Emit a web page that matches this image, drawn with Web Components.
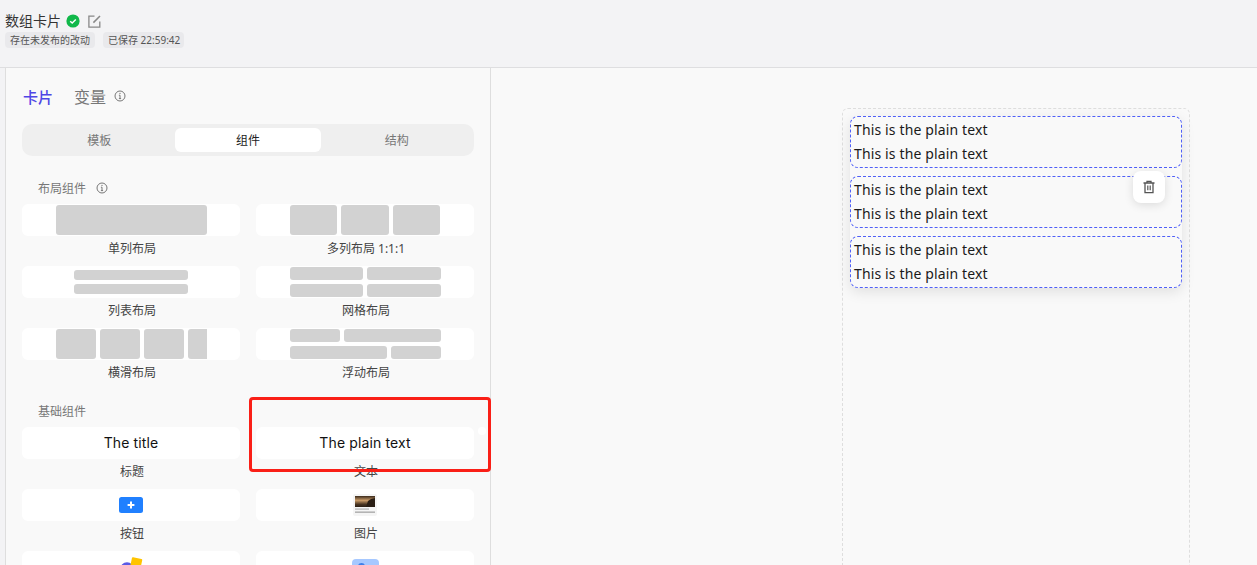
<!DOCTYPE html>
<html lang="zh">
<head>
<meta charset="utf-8">
<title>数组卡片</title>
<style>
  html, body { margin: 0; height: 100%; overflow: hidden; background: #f9f9f9; }
  body { font-family: "Noto Sans CJK SC", "Liberation Sans", sans-serif; }
</style>
</head>
<body>
<editor-app></editor-app>

<script>
const CJK = '"Noto Sans", "Noto Sans CJK SC", sans-serif';
const INFO_ICON = `<svg width="12" height="12" viewBox="0 0 12 12" fill="none" stroke="#777" stroke-width="1"><circle cx="6" cy="6" r="5"/><path d="M6 5.2v3.2M4.9 8.6h2.2M4.9 5.2H6"/><circle cx="6" cy="3.4" r=".6" fill="#777" stroke="none"/></svg>`;

class EditorHeader extends HTMLElement {
    connectedCallback() {
        this.attachShadow({ mode: 'open' });
        this.shadowRoot.innerHTML = `
            <style>
                :host {
                    display: block;
                    height: 55px;
                    padding: 12px 5px 0;
                    background: #f3f3f5;
                    border-bottom: 1px solid #dedee0;
                    font-family: ${CJK};
                }
                .title {
                    display: flex;
                    align-items: center;
                    height: 18px;
                    font-size: 14px;
                    line-height: 18px;
                    color: #333;
                }
                .title svg { display: block; flex: none; }
                .check { margin-left: 5px; }
                .edit { margin-left: 8px; }
                .tags { display: flex; gap: 8px; margin-top: 2px; }
                .tag {
                    height: 16px;
                    line-height: 16px;
                    padding: 0 5px;
                    font-size: 10px;
                    color: #555;
                    background: #e9e9ec;
                    border-radius: 4px;
                }
                .tag + .tag { padding-right: 4px; }
            </style>
            <div class="title">
                <span>数组卡片</span>
                <svg class="check" width="14" height="14" viewBox="0 0 14 14"><circle cx="7" cy="7" r="6.6" fill="#10b84a"/><path d="M4.2 7.2l2 1.9 3.6-3.6" fill="none" stroke="#fff" stroke-width="1.4"/></svg>
                <svg class="edit" width="13" height="13" viewBox="0 0 13 13" fill="none" stroke="#888" stroke-width="1.3"><path d="M6.5 1.2H.9v10.9h10.9V6.5"/><path d="M5.4 7.6L12 1" stroke-width="1.5"/></svg>
            </div>
            <div class="tags">
                <span class="tag">存在未发布的改动</span>
                <span class="tag">已保存 22:59:42</span>
            </div>
        `;
    }
}

class PanelTabs extends HTMLElement {
    connectedCallback() {
        this.attachShadow({ mode: 'open' });
        this.shadowRoot.innerHTML = `
            <style>
                :host {
                    display: grid;
                    grid-template-columns: repeat(3, 1fr);
                    gap: 2px;
                    padding: 4px;
                    height: 24px;
                    background: #efefef;
                    border-radius: 10px;
                }
                div {
                    height: 24px;
                    line-height: 26px;
                    text-align: center;
                    font-size: 12px;
                    color: #777;
                    border-radius: 6px;
                }
                .on { background: #fff; color: #222; }
            </style>
            <div>模板</div>
            <div class="on">组件</div>
            <div>结构</div>
        `;
    }
}

class SectionLabel extends HTMLElement {
    connectedCallback() {
        this.attachShadow({ mode: 'open' });
        const info = this.hasAttribute('info') ? INFO_ICON : '';
        this.shadowRoot.innerHTML = `
            <style>
                :host {
                    display: flex;
                    align-items: center;
                    gap: 10px;
                    height: 24px;
                    padding-left: 16px;
                    margin-bottom: 4px;
                    font-size: 12px;
                    color: #777;
                }
                svg { display: block; }
            </style>
            <span><slot></slot></span>${info}
        `;
    }
}

class CompTile extends HTMLElement {
    connectedCallback() {
        this.attachShadow({ mode: 'open' });
        const label = this.getAttribute('label');
        this.shadowRoot.innerHTML = `
            <style>
                :host { display: block; height: 62px; }
                .box {
                    height: 32px;
                    display: flex;
                    align-items: center;
                    justify-content: center;
                    background: #fff;
                    border-radius: 6px;
                    overflow: hidden;
                }
                .label {
                    height: 24px;
                    padding-left: 2px;
                    line-height: 26px;
                    text-align: center;
                    font-size: 12px;
                    color: #444;
                }
            </style>
            <div class="box"><slot></slot></div>
            ${label ? `<div class="label">${label}</div>` : ''}
        `;
    }
}

// grey placeholder that shows the shape of a layout: rows of blocks with given widths
class LayoutThumb extends HTMLElement {
    connectedCallback() {
        this.attachShadow({ mode: 'open' });
        const rows = this.getAttribute('rows').split('|').map(r => r.split(',').map(Number));
        const h = (30 - (rows.length - 1) * 4) / rows.length;
        const size = this.getAttribute('size') || 151;
        const blockH = this.getAttribute('block') || h;
        this.shadowRoot.innerHTML = `
            <style>
                :host {
                    display: flex;
                    flex-direction: column;
                    gap: 4px;
                    width: ${size}px;
                    overflow: hidden;
                }
                .row { display: flex; gap: 4px; }
                i {
                    flex: none;
                    display: block;
                    height: ${blockH}px;
                    background: #d2d2d2;
                    border-radius: 3px;
                }
            </style>
            ${rows.map(r => `<div class="row">${r.map(w => `<i style="width:${w}px"></i>`).join('')}</div>`).join('')}
        `;
    }
}

class SidePanel extends HTMLElement {
    connectedCallback() {
        this.attachShadow({ mode: 'open' });
        this.shadowRoot.innerHTML = `
            <style>
                :host {
                    display: block;
                    position: relative;
                    width: 484px;
                    background: #f9f9f9;
                    border-left: 1px solid #dedede;
                    border-right: 1px solid #dedede;
                }
                .inner { padding: 0 16px; }
                .head {
                    display: flex;
                    align-items: center;
                    height: 56px;
                    font-size: 16px;
                    color: #777;
                }
                .head b { font-size: 15px; font-weight: 500; color: #4f46e5; margin: 0 21px 0 1px; }
                .head svg { margin-left: 8px; }
                .grid { display: grid; grid-template-columns: 218px 218px; column-gap: 16px; }
                panel-tabs { margin-bottom: 20px; }
                .base { margin-top: 9px; }
                .text-title { font: 14px Inter, sans-serif; letter-spacing: .12px; color: #111; padding-bottom: 1px; }
                .mark {
                    position: absolute;
                    left: 243px;
                    top: 329px;
                    width: 242px;
                    height: 75px;
                    box-sizing: border-box;
                    border: 3px solid #fa1f17;
                    border-radius: 4px;
                }
                .dot {
                    position: absolute;
                    left: 472px;
                    top: 359px;
                    width: 8px;
                    height: 8px;
                    border-radius: 50%;
                    background: #fff;
                }
                .upper { margin-top: 6px; }
                .lower { margin-top: 10px; }
            </style>
            <div class="inner">
                <div class="head"><b>卡片</b><span>变量</span>${INFO_ICON}</div>
                <panel-tabs></panel-tabs>
                <section-label info>布局组件</section-label>
                <div class="grid">
                    <comp-tile label="单列布局"><layout-thumb rows="151"></layout-thumb></comp-tile>
                    <comp-tile label="多列布局 1:1:1"><layout-thumb rows="47.6,47.6,47.6"></layout-thumb></comp-tile>
                    <comp-tile label="列表布局"><layout-thumb size="114" rows="114|114" block="10"></layout-thumb></comp-tile>
                    <comp-tile label="网格布局"><layout-thumb rows="73.5,73.5|73.5,73.5"></layout-thumb></comp-tile>
                    <comp-tile label="横滑布局"><layout-thumb rows="40,40,40,40"></layout-thumb></comp-tile>
                    <comp-tile label="浮动布局"><layout-thumb rows="50,97|97,50"></layout-thumb></comp-tile>
                </div>
                <section-label class="base">基础组件</section-label>
                <div class="grid">
                    <comp-tile label="标题"><span class="text-title">The title</span></comp-tile>
                    <comp-tile label="文本"><span class="text-title">The plain text</span></comp-tile>
                    <comp-tile label="按钮">
                        <svg width="24" height="16" viewBox="0 0 24 16"><rect width="24" height="16" rx="2.5" fill="#2080ff"/><path d="M12 4.6v6.8M8.6 8h6.8" stroke="#fff" stroke-width="2"/></svg>
                    </comp-tile>
                    <comp-tile label="图片">
                        <svg width="24" height="22" viewBox="0 0 24 22">
                            <defs><linearGradient id="sky" x1="0" y1="0" x2="0" y2="1"><stop offset="0" stop-color="#3a2a1c"/><stop offset=".4" stop-color="#c99a66"/><stop offset=".75" stop-color="#4a3522"/><stop offset="1" stop-color="#2a1e14"/></linearGradient></defs>
                            <rect width="24" height="22" rx="2" fill="#f5f5f5"/>
                            <rect x="2" y="2" width="20" height="11" fill="url(#sky)"/>
                            <path d="M13 13l2-6 3-2 4-1v9z" fill="#2a1e14"/>
                            <rect x="2" y="14.4" width="14" height="1.4" fill="#bbb"/>
                            <rect x="2" y="17.4" width="20" height="1.6" fill="#b4b4b4"/>
                        </svg>
                    </comp-tile>
                    <comp-tile>
                        <svg class="upper" width="24" height="26" viewBox="0 0 24 26"><circle cx="8" cy="12" r="6.8" fill="#5b5be6"/><rect x="12" y="1" width="10.5" height="11" rx="1" transform="rotate(12 17 6)" fill="#ffc400"/></svg>
                    </comp-tile>
                    <comp-tile>
                        <svg class="lower" width="27" height="26" viewBox="0 0 27 26"><rect width="27" height="26" rx="4" fill="#a6c8ff"/><circle cx="9.5" cy="7.5" r="3.5" fill="#3f7fe8"/></svg>
                    </comp-tile>
                </div>
            </div>
            <div class="dot"></div>
            <div class="mark"></div>
        `;
    }
}

class TextGroup extends HTMLElement {
    connectedCallback() {
        this.attachShadow({ mode: 'open' });
        this.shadowRoot.innerHTML = `
            <style>
                :host {
                    display: block;
                    box-sizing: border-box;
                    height: 52px;
                    padding: 1px 3px;
                    border: 1px dashed #4f5ff7;
                    border-radius: 8px;
                    font: 14px/24px "Noto Sans", sans-serif;
                    letter-spacing: .14px;
                    color: #1a1a1a;
                }
            </style>
            <div>This is the plain text</div>
            <div>This is the plain text</div>
        `;
    }
}

class DesignCanvas extends HTMLElement {
    connectedCallback() {
        this.attachShadow({ mode: 'open' });
        this.shadowRoot.innerHTML = `
            <style>
                :host {
                    display: block;
                    flex: 1;
                    padding: 40px 0 0 351px;
                    background: #f9f9f9;
                    overflow: hidden;
                }
                .card {
                    width: 332px;
                    height: 520px;
                    padding: 7px 7px 0;
                    background: #f9f9f9;
                    border: 1px dashed #dedede;
                    border-radius: 6px;
                }
                .list {
                    position: relative;
                    display: flex;
                    flex-direction: column;
                    gap: 8px;
                    border-radius: 8px;
                    box-shadow: 0 4px 14px rgba(0, 0, 0, .1);
                }
                .del {
                    position: absolute;
                    top: 55px;
                    right: 17px;
                    width: 32px;
                    height: 32px;
                    display: flex;
                    align-items: center;
                    justify-content: center;
                    background: #fff;
                    border-radius: 8px;
                    box-shadow: 0 2px 10px rgba(0, 0, 0, .12);
                }
            </style>
            <div class="card">
                <div class="list">
                    <text-group></text-group>
                    <text-group></text-group>
                    <text-group></text-group>
                    <div class="del">
                        <svg width="14" height="14" viewBox="0 0 14 14" fill="none" stroke="#555" stroke-width="1.3"><path d="M1.5 3h11M5 3V1.4h4V3M3 3v9.6h8V3"/><path d="M5.8 5.5v4.8M8.2 5.5v4.8" stroke-width="1.2"/></svg>
                    </div>
                </div>
            </div>
        `;
    }
}

class EditorApp extends HTMLElement {
    connectedCallback() {
        this.attachShadow({ mode: 'open' });
        this.shadowRoot.innerHTML = `
            <style>
                :host {
                    display: flex;
                    flex-direction: column;
                    height: 565px;
                    overflow: hidden;
                    font-family: ${CJK};
                }
                .body { flex: 1; display: flex; min-height: 0; }
                .gutter { width: 5px; background: #f3f3f5; }
                design-canvas { min-width: 0; }
            </style>
            <editor-header></editor-header>
            <div class="body">
                <div class="gutter"></div>
                <side-panel></side-panel>
                <design-canvas></design-canvas>
            </div>
        `;
    }
}

customElements.define('editor-header', EditorHeader);
customElements.define('panel-tabs', PanelTabs);
customElements.define('section-label', SectionLabel);
customElements.define('comp-tile', CompTile);
customElements.define('layout-thumb', LayoutThumb);
customElements.define('side-panel', SidePanel);
customElements.define('text-group', TextGroup);
customElements.define('design-canvas', DesignCanvas);
customElements.define('editor-app', EditorApp);
</script>
</body>
</html>
